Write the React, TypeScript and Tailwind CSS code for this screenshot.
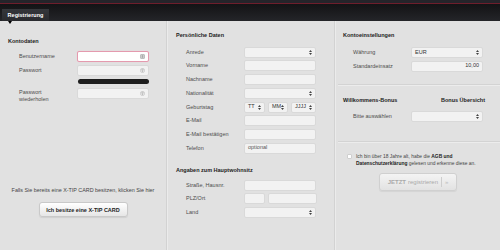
import React from 'react';

const Arrows: React.FC = () => (
  <svg width="3" height="5" viewBox="0 0 3 5" className="shrink-0">
    <path d="M1.5 0 L3 2 L0 2 Z" fill="#444" />
    <path d="M1.5 5 L3 3 L0 3 Z" fill="#444" />
  </svg>
);

interface FieldProps {
  w?: string;
  value?: string;
  select?: boolean;
  right?: boolean;
  muted?: boolean;
  icon?: 'card' | 'key';
  focus?: boolean;
}

const Field: React.FC<FieldProps> = ({ w = 'w-[72px]', value, select, right, muted, icon, focus }) => (
  <div
    className={`${w} h-[11px] shrink-0 flex items-center px-[3px] rounded-[2px] border text-[5.5px] leading-none ${
      focus ? 'bg-white border-[#e49aae] shadow-[0_0_1px_#f0b8c6]' : 'bg-[#f2f2f2] border-[#d9d9d9]'
    } ${right ? 'justify-end' : 'justify-between'}`}
  >
    {value && <span className={muted ? 'text-[#555]' : 'text-[#333]'}>{value}</span>}
    {!value && <span />}
    {select && <Arrows />}
    {icon === 'card' && (
      <svg width="5" height="5" viewBox="0 0 5 5">
        <rect x="0.5" y="0.5" width="4" height="4" rx="0.6" fill="#ccc" stroke="#999" strokeWidth="0.5" />
        <path d="M2.5 1.2 V3.8" stroke="#888" strokeWidth="0.5" />
      </svg>
    )}
    {icon === 'key' && (
      <svg width="5" height="5" viewBox="0 0 5 5">
        <circle cx="2.5" cy="2.5" r="2.1" fill="none" stroke="#aaa" strokeWidth="0.5" />
        <circle cx="2.5" cy="2" r="0.8" fill="none" stroke="#999" strokeWidth="0.5" />
        <path d="M2.5 2.8 V4" stroke="#999" strokeWidth="0.5" />
      </svg>
    )}
  </div>
);

const Row: React.FC<{ label: string; children: React.ReactNode; indent?: string }> = ({ label, children, indent = 'pl-[18px]' }) => (
  <div className={`flex items-center ${indent}`}>
    <span className="w-[58px] shrink-0 text-[5.5px] leading-[7px] text-[#4d4d4d]">{label}</span>
    {children}
  </div>
);

const Heading: React.FC<{ children: React.ReactNode; className?: string }> = ({ children, className = '' }) => (
  <div className={`h-[7px] text-[5.5px] leading-[7px] font-bold text-[#222] ${className}`}>{children}</div>
);

const Divider: React.FC = () => (
  <div className="w-[2px] shrink-0 flex">
    <div className="w-px bg-[#d2d2d2]" />
    <div className="w-px bg-[#ebebeb]" />
  </div>
);

export default function App() {
  return (
    <div className="w-[500px] h-[250px] overflow-hidden bg-[#e1e1e1] font-['Liberation_Sans',Arial,sans-serif]">
      {/* top bar */}
      <div className="h-[3px] bg-[#25242a]" />
      <div className="h-px bg-[#6e1e2c]" />
      <div className="h-[17px] bg-gradient-to-b from-[#131315] to-[#242529] pt-[5px] pl-[2px]">
        <div className="relative w-[47px] h-[12px] bg-gradient-to-b from-[#34363a] to-[#2a2b2f] flex items-center justify-center text-[5.5px] font-bold text-white">
          Registrierung
          <div className="absolute left-[6px] top-[12px] w-0 h-0 border-l-[2px] border-r-[2px] border-t-[3px] border-l-transparent border-r-transparent border-t-black" />
        </div>
      </div>

      <div className="flex h-[229px]">
        {/* Kontodaten */}
        <div className="w-[166px] shrink-0 flex flex-col">
          <Heading className="mt-[17px] pl-[8px]">Kontodaten</Heading>
          <div className="mt-[6px]">
            <Row label="Benutzername" indent="pl-[19px]">
              <Field focus icon="card" />
            </Row>
          </div>
          <div className="mt-[3px]">
            <Row label="Passwort" indent="pl-[19px]">
              <Field icon="key" />
            </Row>
          </div>
          <div className="mt-[3px] pl-[78px]">
            <div className="w-[71px] h-[5px] rounded-full bg-[#1e1e1e]" />
          </div>
          <div className="mt-[4px] flex items-start pl-[19px]">
            <span className="w-[58px] shrink-0 text-[5.5px] leading-[7px] text-[#4d4d4d] pt-[1px]">
              Passwort
              <br />
              wiederholen
            </span>
            <Field icon="key" />
          </div>
          <div className="mt-[83.5px] h-[7px] text-center text-[5.4px] leading-[7px] text-[#444]">
            Falls Sie bereits eine X-TIP CARD besitzen, klicken Sie hier
          </div>
          <div className="mt-[8.8px] flex justify-center">
            <div className="w-[89px] h-[15px] flex items-center justify-center rounded-[3px] border border-[#c9c9c9] bg-gradient-to-b from-white to-[#e6e6e6] shadow-[0_1px_1px_rgba(0,0,0,0.08)] text-[5.5px] font-bold text-[#222]">
              Ich besitze eine X-TIP CARD
            </div>
          </div>
        </div>

        <Divider />

        {/* Persönliche Daten */}
        <div className="w-[166px] shrink-0 flex flex-col">
          <Heading className="mt-[11px] pl-[8px]">Persönliche Daten</Heading>
          <div className="mt-[7.8px] flex flex-col gap-[2.7px]">
            <Row label="Anrede">
              <Field select />
            </Row>
            <Row label="Vorname">
              <Field />
            </Row>
            <Row label="Nachname">
              <Field />
            </Row>
            <Row label="Nationalität">
              <Field select />
            </Row>
            <Row label="Geburtstag">
              <div className="flex gap-[3px]">
                <Field w="w-[21px]" value="TT" select />
                <Field w="w-[20px]" value="MM" select />
                <Field w="w-[25px]" value="JJJJ" select />
              </div>
            </Row>
            <Row label="E-Mail">
              <Field />
            </Row>
            <Row label="E-Mail bestätigen">
              <Field />
            </Row>
            <Row label="Telefon">
              <Field value="optional" muted />
            </Row>
          </div>
          <Heading className="mt-[13.3px] pl-[8px]">Angaben zum Hauptwohnsitz</Heading>
          <div className="mt-[5.8px] flex flex-col gap-[2.7px]">
            <Row label="Straße, Hausnr.">
              <Field />
            </Row>
            <Row label="PLZ/Ort">
              <div className="flex gap-[3px]">
                <Field w="w-[21px]" />
                <Field w="w-[49px]" />
              </div>
            </Row>
            <Row label="Land">
              <Field select />
            </Row>
          </div>
        </div>

        <Divider />

        {/* Kontoeinstellungen */}
        <div className="flex-1 flex flex-col">
          <Heading className="mt-[11px] pl-[7px]">Kontoeinstellungen</Heading>
          <div className="mt-[8px] flex flex-col gap-[2.7px]">
            <Row label="Währung" indent="pl-[17px]">
              <Field value="EUR" select />
            </Row>
            <Row label="Standardeinsatz" indent="pl-[17px]">
              <Field value="10,00" right />
            </Row>
          </div>
          <div className="mt-[12px] ml-[2px] h-px bg-[#ececec] border-t border-[#d3d3d3] box-content" />
          <div className="mt-[11px] pl-[7px] pr-[15px] flex justify-between">
            <Heading>Willkommens-Bonus</Heading>
            <Heading>Bonus Übersicht</Heading>
          </div>
          <div className="mt-[7px]">
            <Row label="Bitte auswählen" indent="pl-[17px]">
              <Field select />
            </Row>
          </div>
          <div className="mt-[19px] ml-[2px] h-px bg-[#ececec] border-t border-[#d3d3d3] box-content" />
          <div className="mt-[10px] flex items-start pl-[11px]">
            <div className="mt-[1.5px] w-[5px] h-[5px] shrink-0 bg-white border border-[#cfcfcf] rounded-[1px]" />
            <p className="ml-[4px] text-[4.9px] leading-[7px] text-[#444]">
              Ich bin über 18 Jahre alt, habe die <b className="text-[#222]">AGB und</b>
              <br />
              <b className="text-[#222]">Datenschutzerklärung</b> gelesen und erkenne diese an.
            </p>
          </div>
          <div className="mt-[6.5px] flex justify-center">
            <div className="w-[78px] h-[18px] flex items-center justify-center rounded-[3px] border border-[#d0d0d0] bg-gradient-to-b from-[#f4f4f4] to-[#e2e2e2] shadow-[0_1px_1px_rgba(0,0,0,0.06)] text-[6px] text-[#a9a9a9]">
              <span className="font-bold">JETZT</span>
              <span className="ml-[2px]">registrieren</span>
              <span className="ml-[3px] w-px h-[10px] bg-[#cdcdcd]" />
              <span className="ml-[3px] text-[#bbb]">»</span>
            </div>
          </div>
        </div>
      </div>
    </div>
  );
}
